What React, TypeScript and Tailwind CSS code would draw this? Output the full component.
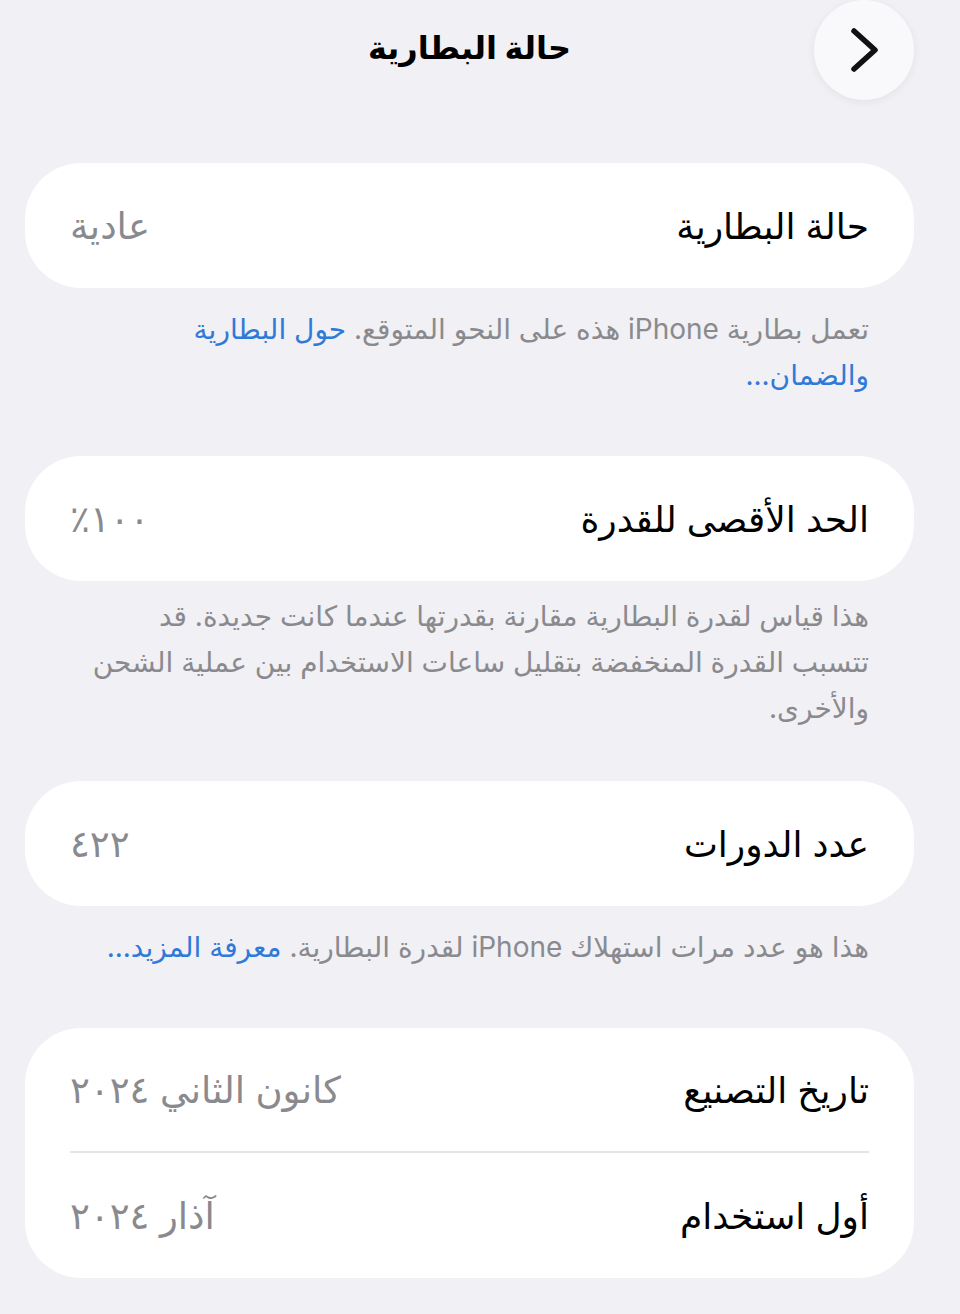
import React from "react";

const font = { fontFamily: '"Inter", "DejaVu Sans", sans-serif' };

function Row({ label, value, divider }: { label: string; value: string; divider?: boolean }) {
  return (
    <div className="px-[45px]">
      <div className={`flex h-[125px] items-center justify-between ${divider ? "border-b-2 border-[#e3e3e8]" : ""}`}>
        <span className="text-[36px] text-black">{label}</span>
        <span className="text-[37px] text-[#8a8a8e]">{value}</span>
      </div>
    </div>
  );
}

function Card({ children }: { children: React.ReactNode }) {
  return <div className="rounded-[56px] bg-white">{children}</div>;
}

export default function App() {
  return (
    <div dir="rtl" style={font} className="min-h-[1314px] w-[960px] bg-[#f0f0f5] pl-[25px] pr-[46px]">
      <div className="grid h-[100px] grid-cols-[1fr_auto_1fr] items-center">
        <div className="flex justify-start">
          <button className="flex h-[100px] w-[100px] items-center justify-center rounded-full bg-[#f9f9fb] shadow-[0_2px_10px_rgba(0,0,0,0.06)]">
            <svg width="44" height="52" viewBox="0 0 44 52" fill="none">
              <polyline points="12,7 33,26 12,45" stroke="#111" strokeWidth="5.5" strokeLinecap="round" strokeLinejoin="round" />
            </svg>
          </button>
        </div>
        <h1 className="pb-[4px] text-[32px] font-bold text-black">حالة البطارية</h1>
        <div />
      </div>

      <div className="mt-[63px]">
        <Card>
          <Row label="حالة البطارية" value="عادية" />
        </Card>
        <p className="px-[45px] pb-[58px] pt-[18px] text-[28px] leading-[46px] text-[#8a8a8e]">
          تعمل بطارية iPhone هذه على النحو المتوقع. <span className="text-[#2f7ad8]">حول البطارية</span>
          <br />
          <span className="text-[#2f7ad8]">والضمان...</span>
        </p>

        <Card>
          <Row label="الحد الأقصى للقدرة" value="١٠٠٪" />
        </Card>
        <p className="px-[45px] pb-[50px] pt-[12px] text-[28px] leading-[46px] text-[#8a8a8e]">
          هذا قياس لقدرة البطارية مقارنة بقدرتها عندما كانت جديدة. قد
          <br />
          تتسبب القدرة المنخفضة بتقليل ساعات الاستخدام بين عملية الشحن
          <br />
          والأخرى.
        </p>

        <Card>
          <Row label="عدد الدورات" value="٤٢٢" />
        </Card>
        <p className="px-[45px] pb-[58px] pt-[18px] text-[28px] leading-[46px] text-[#8a8a8e]">
          هذا هو عدد مرات استهلاك iPhone لقدرة البطارية. <span className="text-[#2f7ad8]">معرفة المزيد...</span>
        </p>

        <Card>
          <Row label="تاريخ التصنيع" value="كانون الثاني ٢٠٢٤" divider />
          <Row label="أول استخدام" value="آذار ٢٠٢٤" />
        </Card>
      </div>
    </div>
  );
}
